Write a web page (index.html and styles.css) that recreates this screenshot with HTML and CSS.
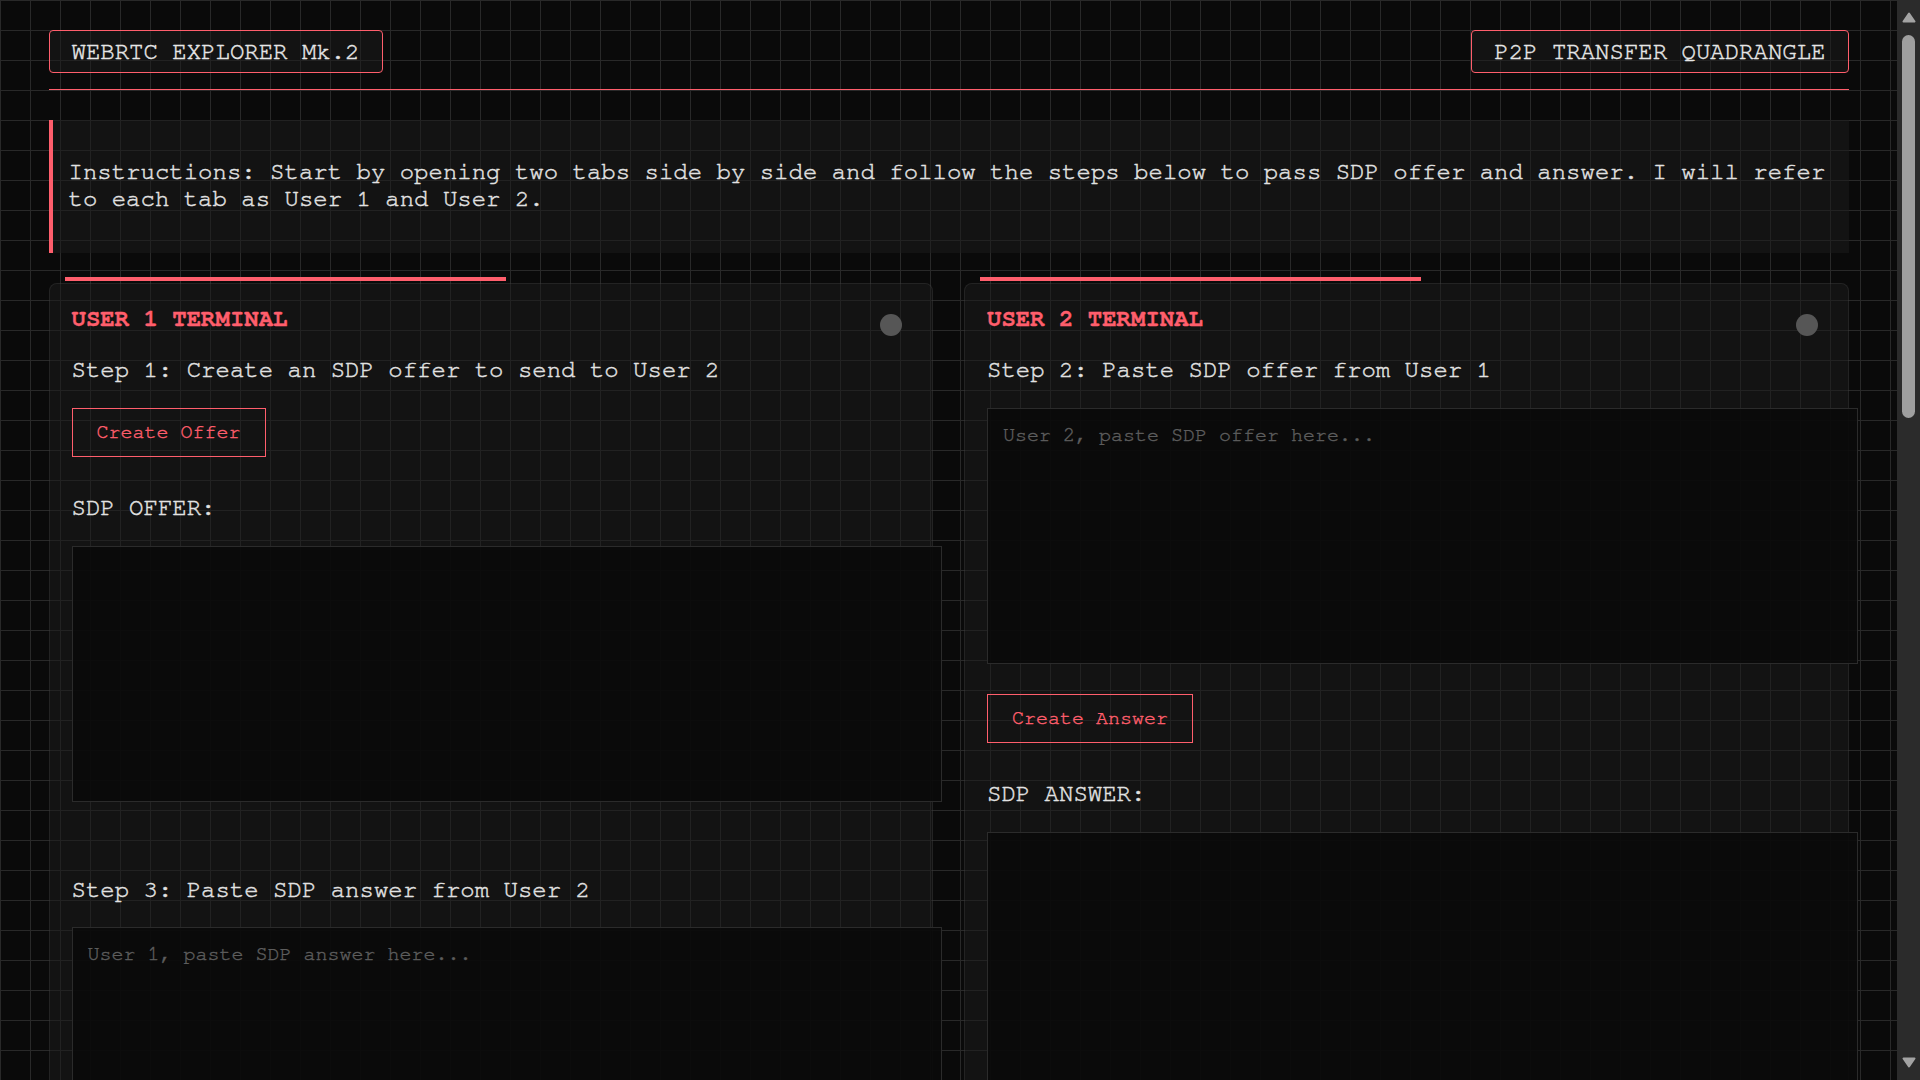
FILE: index.html
```html
<!DOCTYPE html>
<html lang="en">
<head>
<meta charset="utf-8">
<title>WebRTC Explorer Mk.2</title>
<link rel="stylesheet" href="styles.css">
</head>
<body>
<div class="viewport">
<div class="page">
  <header class="topbar">
    <div class="tag">WEBRTC EXPLORER Mk.2</div>
    <div class="tag">P2P TRANSFER QUADRANGLE</div>
  </header>

  <section class="instructions">
    <p>Instructions: Start by opening two tabs side by side and follow the steps below to pass SDP offer and answer. I will refer to each tab as User 1 and User 2.</p>
  </section>

  <main class="terminals">
    <section class="terminal">
      <span class="status-dot"></span>
      <h2 class="terminal-title">USER 1 TERMINAL</h2>
      <p class="step">Step 1: Create an SDP offer to send to User 2</p>
      <button class="btn">Create Offer</button>
      <p class="label">SDP OFFER:</p>
      <textarea class="sdp" readonly></textarea>
      <p class="step step-later">Step 3: Paste SDP answer from User 2</p>
      <textarea class="sdp" placeholder="User 1, paste SDP answer here..."></textarea>
      <button class="btn btn-after">Add Answer</button>
    </section>

    <section class="terminal">
      <span class="status-dot"></span>
      <h2 class="terminal-title">USER 2 TERMINAL</h2>
      <p class="step">Step 2: Paste SDP offer from User 1</p>
      <textarea class="sdp" placeholder="User 2, paste SDP offer here..."></textarea>
      <button class="btn btn-after">Create Answer</button>
      <p class="label">SDP ANSWER:</p>
      <textarea class="sdp" readonly></textarea>
    </section>
  </main>

  <section class="channel">
    <h2 class="terminal-title">DATA CHANNEL</h2>
    <div class="channel-grid">
      <div class="channel-panel">
        <p class="label label-first">MESSAGES:</p>
        <div class="log"></div>
        <div class="send-row">
          <input class="msg-input" type="text" placeholder="Type a message...">
          <button class="btn">Send</button>
        </div>
      </div>
      <div class="channel-panel">
        <p class="label label-first">FILE TRANSFER:</p>
        <div class="log"></div>
        <div class="send-row">
          <button class="btn">Choose File</button>
          <button class="btn">Send File</button>
        </div>
      </div>
    </div>
  </section>
</div>
</div>
<div class="scrollbar" aria-hidden="true">
  <div class="sb-button">
    <svg width="14" height="11" viewBox="0 0 14 11"><polygon points="7,1.5 12.5,9.5 1.5,9.5" fill="#a3a3a3" stroke="#a3a3a3" stroke-width="2" stroke-linejoin="round"/></svg>
  </div>
  <div class="sb-thumb"></div>
  <div class="sb-spacer"></div>
  <div class="sb-button sb-button-down">
    <svg width="14" height="11" viewBox="0 0 14 11"><polygon points="1.5,1.5 12.5,1.5 7,9.5" fill="#a3a3a3" stroke="#a3a3a3" stroke-width="2" stroke-linejoin="round"/></svg>
  </div>
</div>
</body>
</html>
```

FILE: styles.css
```css
:root {
  color-scheme: dark;
  --accent: #ff5e6c;
  --text: #e2e2e2;
  --panel: rgba(28, 28, 28, 0.5);
  --mono: "Nimbus Mono PS", "Nimbus Mono L", "FreeMono", "Courier 10 Pitch", "Courier", "Courier New", "Liberation Mono", monospace;
}

* {
  box-sizing: border-box;
}

html,
body {
  margin: 0;
  padding: 0;
  height: 100%;
  overflow: hidden;
}

body {
  display: flex;
  background-color: #0a0a0a;
  color: var(--text);
  font-family: var(--mono);
  font-size: 24px;
  line-height: 1.133;
  -webkit-text-stroke: 0.45px currentColor;
}

.viewport {
  flex: 1;
  min-width: 0;
  height: 100vh;
  overflow-y: auto;
  scrollbar-width: none;
  background-color: #0a0a0a;
  background-image:
    linear-gradient(to right, #292929 1px, transparent 1px),
    linear-gradient(to bottom, #292929 1px, transparent 1px);
  background-size: 30px 30px;
  background-attachment: local;
}

.page {
  max-width: 1800px;
  margin: 0 auto;
  padding: 30px 0 60px;
}

.topbar {
  display: flex;
  justify-content: space-between;
  align-items: flex-start;
  padding-bottom: 16px;
  border-bottom: 1px solid var(--accent);
}

.tag {
  padding: 8px 22px 6px;
  border: 1px solid var(--accent);
  border-radius: 4px;
  background: var(--panel);
  color: #e6e6e6;
}

.instructions {
  margin-top: 30px;
  padding: 15px 16px 15px;
  border-left: 4px solid var(--accent);
  background: var(--panel);
}

.instructions p {
  margin: 24px 0;
}

.terminals {
  display: grid;
  grid-template-columns: 1fr 1fr;
  gap: 31px;
  margin-top: 30px;
  align-items: stretch;
}

.terminal {
  position: relative;
  padding: 22px 22px 24px;
  border: 1px solid rgba(255, 255, 255, 0.07);
  border-radius: 8px;
  background: var(--panel);
}

.terminal::before {
  content: "";
  position: absolute;
  top: -7px;
  left: 15px;
  width: 50%;
  height: 4px;
  background: var(--accent);
}

.status-dot {
  position: absolute;
  top: 30px;
  right: 30px;
  width: 22px;
  height: 22px;
  border-radius: 50%;
  background: #565656;
}

.terminal-title {
  margin: 0 0 24px;
  font-size: 24px;
  line-height: 1.133;
  font-weight: bold;
  color: var(--accent);
  -webkit-text-stroke: 0.3px currentColor;
}

.step {
  margin: 0 0 24px;
}

.step-later {
  margin-top: 75px;
  margin-bottom: 23px;
}

.btn {
  display: block;
  padding: 12px 24px;
  border: 1px solid var(--accent);
  border-radius: 0;
  background: transparent;
  color: var(--accent);
  font-family: var(--mono);
  font-size: 20px;
  line-height: 1.133;
  -webkit-text-stroke: 0.4px currentColor;
  cursor: pointer;
}

.btn-after {
  margin-top: 30px;
}

.label {
  margin: 38px 0 24px;
}

.sdp {
  display: block;
  box-sizing: content-box;
  width: 100%;
  height: 224px;
  padding: 15px;
  border: 1px solid #2b2b2b;
  border-radius: 0;
  background: rgba(10, 10, 10, 0.9);
  color: var(--text);
  font-family: var(--mono);
  font-size: 20px;
  line-height: 1.133;
  -webkit-text-stroke: 0.4px #5d5d5d;
  resize: none;
  outline: none;
}

.sdp::placeholder,
.msg-input::placeholder {
  color: #5d5d5d;
}

.channel {
  margin-top: 40px;
  padding: 24px 22px;
  border: 1px solid rgba(255, 255, 255, 0.07);
  border-radius: 8px;
  background: var(--panel);
}

.channel-grid {
  display: grid;
  grid-template-columns: 1fr 1fr;
  gap: 31px;
}

.label-first {
  margin-top: 0;
}

.log {
  height: 1290px;
  border: 1px solid #2b2b2b;
  background: rgba(10, 10, 10, 0.9);
}

.send-row {
  display: flex;
  gap: 16px;
  margin-top: 24px;
}

.msg-input {
  flex: 1;
  padding: 12px 15px;
  border: 1px solid #2b2b2b;
  background: rgba(10, 10, 10, 0.9);
  color: var(--text);
  font-family: var(--mono);
  font-size: 20px;
}

.scrollbar {
  flex: 0 0 23px;
  display: flex;
  flex-direction: column;
  align-items: center;
  height: 100vh;
  background: #2b2b2b;
}

.sb-button {
  display: flex;
  align-items: center;
  justify-content: center;
  width: 23px;
  height: 35px;
}

.sb-thumb {
  width: 13px;
  height: 383px;
  border-radius: 7px;
  background: #9f9f9f;
}

.sb-spacer {
  flex: 1;
}
```
